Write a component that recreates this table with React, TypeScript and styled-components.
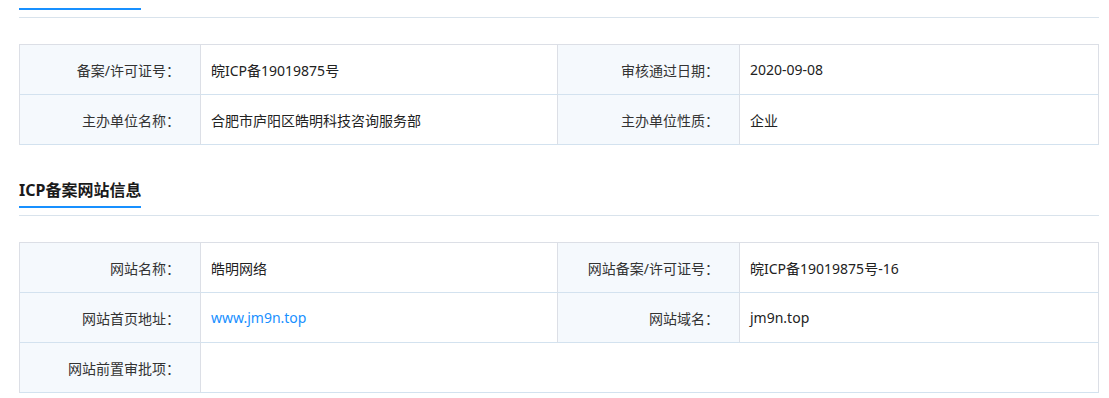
import styled, { createGlobalStyle } from "styled-components"

const GlobalStyle = createGlobalStyle`
    html, body {
        margin: 0;
        padding: 0;
        background: #fff;
        overflow: hidden;
    }
    body {
        font-family: "Noto Sans", "Noto Sans CJK SC", sans-serif;
        font-size: 14px;
        color: #333;
    }
`

const Page = styled.div`
    width: 1080px;
    margin-top: -20px;
    padding-left: 19px;
`

const Section = styled.section`
    & + & {
        margin-top: 33px;
    }
`

const SectionHeader = styled.div`
    padding-bottom: 7px;
    border-bottom: 1px solid #d9e3ec;
`

const SectionTitle = styled.h3<{ $width?: number }>`
    display: inline-block;
    box-sizing: border-box;
    width: ${p => (p.$width ? `${p.$width}px` : "auto")};
    height: 30px;
    margin: 0;
    padding-bottom: 4px;
    font-size: 16px;
    line-height: 24px;
    font-weight: bold;
    color: #1a1a1a;
    vertical-align: top;
    border-bottom: 2px solid #1890ff;
`

const InfoTable = styled.div`
    display: grid;
    grid-template-columns: 181px 357px 182px 359px;
    grid-auto-rows: 50px;
    margin-top: 26px;
    border-top: 1px solid #dcdfe6;
    border-left: 1px solid #dcdfe6;
`

const Cell = styled.div<{ $span?: number }>`
    display: flex;
    align-items: center;
    grid-column: span ${p => p.$span ?? 1};
    border-right: 1px solid #dcdfe6;
    border-bottom: 1px solid #d3e2ef;
    white-space: nowrap;
`

const Label = styled(Cell)`
    justify-content: flex-end;
    padding-right: 20px;
    background: #f5f9fd;
    color: #333;
`

const Value = styled(Cell)`
    padding-left: 10px;
    color: #222;
`

const SiteLink = styled.a`
    color: #1890ff;
    text-decoration: none;
`

const App = () => {
    return (
        <>
            <GlobalStyle />
            <Page>
                <Section>
                    <SectionHeader>
                        <SectionTitle $width={122} />
                    </SectionHeader>
                    <InfoTable>
                        <Label>备案/许可证号：</Label>
                        <Value>皖ICP备19019875号</Value>
                        <Label>审核通过日期：</Label>
                        <Value>2020-09-08</Value>
                        <Label>主办单位名称：</Label>
                        <Value>合肥市庐阳区皓明科技咨询服务部</Value>
                        <Label>主办单位性质：</Label>
                        <Value>企业</Value>
                    </InfoTable>
                </Section>
                <Section>
                    <SectionHeader>
                        <SectionTitle>ICP备案网站信息</SectionTitle>
                    </SectionHeader>
                    <InfoTable>
                        <Label>网站名称：</Label>
                        <Value>皓明网络</Value>
                        <Label>网站备案/许可证号：</Label>
                        <Value>皖ICP备19019875号-16</Value>
                        <Label>网站首页地址：</Label>
                        <Value><SiteLink href="#">www.jm9n.top</SiteLink></Value>
                        <Label>网站域名：</Label>
                        <Value>jm9n.top</Value>
                        <Label>网站前置审批项：</Label>
                        <Value $span={3}></Value>
                    </InfoTable>
                </Section>
            </Page>
        </>
    )
}

export default App
